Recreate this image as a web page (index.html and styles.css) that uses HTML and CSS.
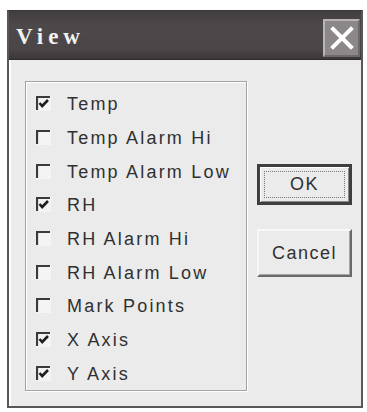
FILE: index.html
```html
<!DOCTYPE html>
<html>
<head>
<meta charset="utf-8">
<link rel="stylesheet" href="styles.css">
</head>
<body>
<div class="dialog">
  <div class="titlebar">
    <span class="title">View</span>
    <div class="close">
      <svg width="26" height="26" viewBox="0 0 26 26"><path d="M4 4 L22 22 M22 4 L4 22" stroke="#fff" stroke-width="4" stroke-linecap="square"/></svg>
    </div>
  </div>
  <div class="content">
    <div class="group">
      <div class="row"><span class="cb checked"><svg width="15" height="15" viewBox="0 0 15 15"><path d="M1 14 V1 H14" stroke="#3a3a3a" stroke-width="2.2" fill="none"/><path d="M3.5 7 L6.2 10 L12 4" stroke="#1e1e1e" stroke-width="2.6" fill="none"/></svg></span><span class="lbl">Temp</span></div>
      <div class="row"><span class="cb"><svg width="15" height="15" viewBox="0 0 15 15"><path d="M1 14 V1 H14" stroke="#3a3a3a" stroke-width="2.2" fill="none"/></svg></span><span class="lbl">Temp Alarm Hi</span></div>
      <div class="row"><span class="cb"><svg width="15" height="15" viewBox="0 0 15 15"><path d="M1 14 V1 H14" stroke="#3a3a3a" stroke-width="2.2" fill="none"/></svg></span><span class="lbl">Temp Alarm Low</span></div>
      <div class="row"><span class="cb checked"><svg width="15" height="15" viewBox="0 0 15 15"><path d="M1 14 V1 H14" stroke="#3a3a3a" stroke-width="2.2" fill="none"/><path d="M3.5 7 L6.2 10 L12 4" stroke="#1e1e1e" stroke-width="2.6" fill="none"/></svg></span><span class="lbl">RH</span></div>
      <div class="row"><span class="cb"><svg width="15" height="15" viewBox="0 0 15 15"><path d="M1 14 V1 H14" stroke="#3a3a3a" stroke-width="2.2" fill="none"/></svg></span><span class="lbl">RH Alarm Hi</span></div>
      <div class="row"><span class="cb"><svg width="15" height="15" viewBox="0 0 15 15"><path d="M1 14 V1 H14" stroke="#3a3a3a" stroke-width="2.2" fill="none"/></svg></span><span class="lbl">RH Alarm Low</span></div>
      <div class="row"><span class="cb"><svg width="15" height="15" viewBox="0 0 15 15"><path d="M1 14 V1 H14" stroke="#3a3a3a" stroke-width="2.2" fill="none"/></svg></span><span class="lbl">Mark Points</span></div>
      <div class="row"><span class="cb checked"><svg width="15" height="15" viewBox="0 0 15 15"><path d="M1 14 V1 H14" stroke="#3a3a3a" stroke-width="2.2" fill="none"/><path d="M3.5 7 L6.2 10 L12 4" stroke="#1e1e1e" stroke-width="2.6" fill="none"/></svg></span><span class="lbl">X Axis</span></div>
      <div class="row"><span class="cb checked"><svg width="15" height="15" viewBox="0 0 15 15"><path d="M1 14 V1 H14" stroke="#3a3a3a" stroke-width="2.2" fill="none"/><path d="M3.5 7 L6.2 10 L12 4" stroke="#1e1e1e" stroke-width="2.6" fill="none"/></svg></span><span class="lbl">Y Axis</span></div>
    </div>
    <div class="buttons">
      <div class="btn ok"><span class="focus">OK</span></div>
      <div class="btn cancel">Cancel</div>
    </div>
  </div>
</div>
</body>
</html>
```
FILE: styles.css
```css
html, body {
  margin: 0;
  padding: 0;
  background: #ffffff;
}
body {
  width: 367px;
  height: 412px;
  overflow: hidden;
  font-family: "Liberation Sans", Arial, sans-serif;
}
.dialog {
  margin: 10px 0 0 7px;
  width: 356px;
  height: 398px;
  box-sizing: border-box;
  border: 2px solid #5a5758;
  border-top: 1px solid #3a3637;
  background: #ebebeb;
  display: flex;
  flex-direction: column;
}
.titlebar {
  height: 49px;
  background: linear-gradient(#423e3f, #4d494a 30%, #4a4647 80%, #3c3839);
  border-bottom: 1px solid #2f2b2c;
  display: flex;
  align-items: center;
  justify-content: space-between;
  padding: 0 1px 0 7px;
  box-sizing: border-box;
}
.title {
  font-family: "Liberation Serif", "Times New Roman", serif;
  font-weight: bold;
  font-size: 23px;
  letter-spacing: 5px;
  color: #f2f2f2;
  margin-top: 4px;
}
.close {
  width: 37px;
  height: 38px;
  box-sizing: border-box;
  border: 2px solid #b9b5b6;
  border-right-color: #6e6a6b;
  border-bottom-color: #6e6a6b;
  background: #8c8889;
  display: flex;
  align-items: center;
  justify-content: center;
  margin-top: 6px;
}
.content {
  flex: 1;
  display: flex;
  gap: 10px;
  padding: 21px 0 0 16px;
  box-shadow: inset 2px 0 0 #ffffff;
}
.group {
  width: 222px;
  height: 310px;
  box-sizing: border-box;
  border: 1px solid #a3a3a3;
  box-shadow: inset 1px 1px 0 #ffffff, 1px 1px 0 #ffffff;
  padding: 5px 0 0 10px;
  display: flex;
  flex-direction: column;
}
.row {
  height: 34px;
  display: flex;
  align-items: center;
  gap: 16px;
}
.cb {
  width: 15px;
  height: 15px;
  display: flex;
  background: #f4f4f4;
}
.lbl {
  font-size: 18px;
  letter-spacing: 2.2px;
  color: #303030;
  margin-top: 2px;
}
.buttons {
  display: flex;
  flex-direction: column;
  padding-top: 83px;
  gap: 24px;
}
.btn {
  width: 95px;
  box-sizing: border-box;
  display: flex;
  align-items: center;
  justify-content: center;
  font-size: 18px;
  letter-spacing: 1.5px;
  color: #303030;
  background: #ebebeb;
}
.ok {
  height: 41px;
  border: 3px solid #3f3f3f;
  box-shadow: inset 1px 1px 0 #ffffff, inset -1px -1px 0 #8a8a8a;
  padding: 4px;
}
.ok .focus {
  flex: 1;
  align-self: stretch;
  display: flex;
  align-items: center;
  justify-content: center;
  border: 1px dotted #777;
}
.cancel {
  height: 48px;
  border: 2px solid #f7f7f7;
  border-right-color: #6a6a6a;
  border-bottom-color: #6a6a6a;
  box-shadow: inset -1px -1px 0 #a8a8a8;
}
```
